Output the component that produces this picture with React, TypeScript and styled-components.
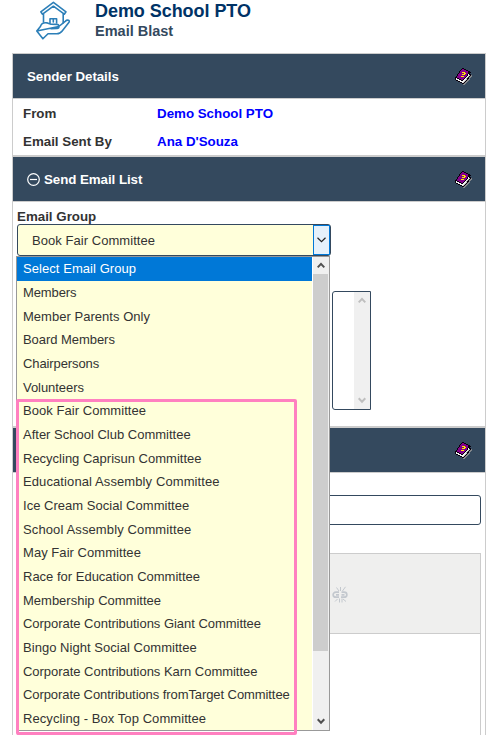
import React from "react";
import styled, { createGlobalStyle } from "styled-components";

const GlobalStyle = createGlobalStyle`
  * { box-sizing: border-box; }
  body {
    margin: 0;
    background: #fff;
    color: #333;
    font: 13.33px/16px "Liberation Sans", Arial, sans-serif;
    overflow: hidden;
  }
`;

const Page = styled.main`
  width: 493px;
  height: 735px;
  overflow: hidden;
  padding-left: 12px;
`;

const Header = styled.header`
  display: flex;
  height: 53px;
  padding-left: 22px;
`;

const Titles = styled.div`
  padding: 1px 0 0 23px;
`;

const Title = styled.h1`
  margin: 0;
  font-size: 18px;
  line-height: 20px;
  letter-spacing: -0.05px;
  color: #003366;
`;

const Subtitle = styled.h2`
  margin: 0;
  font-size: 14.5px;
  line-height: 20px;
  color: #34495e;
`;

const Panel = styled.section<{ $height: number }>`
  width: 474px;
  height: ${(p) => p.$height}px;
  border: 1px solid #ccc;
`;

const Bar = styled.div`
  display: flex;
  align-items: center;
  height: 45px;
  padding: 0 13px 0 14px;
  background: #34495e;
  border-bottom: 1px solid #ccc;
  color: #fff;
  font-weight: bold;
  letter-spacing: -0.06px;
`;

const BarTitle = styled.span<{ $gap?: number }>`
  flex: 1;
  padding-top: 2px;
  margin-left: ${(p) => p.$gap ?? 0}px;
`;

const DetailRow = styled.div<{ $space: number }>`
  display: grid;
  grid-template-columns: 134px 1fr;
  padding: ${(p) => p.$space}px 0 0 10px;
  font-weight: bold;
`;

const Value = styled.span`
  color: #0000ff;
`;

const Form = styled.div`
  padding: 7px 0 0 4px;
`;

const Label = styled.label`
  display: block;
  height: 15px;
  font-weight: bold;
`;

const SelectWrap = styled.div`
  position: relative;
  width: 314px;
  font-size: 13px;
`;

const SelectBox = styled.div`
  display: flex;
  height: 32px;
  border: 1px solid #34495e;
  border-radius: 3px;
  background: #ffffda;
`;

const SelectText = styled.span`
  flex: 1;
  padding: 8px 0 0 14px;
  letter-spacing: 0.05px;
`;

const SelectButton = styled.span`
  display: flex;
  align-items: center;
  justify-content: center;
  width: 17px;
  border: 1px solid #0078d7;
  background: #e5f1fb;
`;

const Menu = styled.div`
  position: absolute;
  z-index: 2;
  top: 32px;
  left: -1px;
  display: flex;
  width: 314px;
  height: 475px;
  border: 1px solid #999;
  background: #fff;
`;

const Options = styled.ul`
  display: grid;
  grid-template-rows: repeat(7, 24px 24px 23px);
  width: 295px;
  margin: 0;
  padding: 0;
  overflow: hidden;
  list-style: none;
  background: #ffffda;
`;

const Option = styled.li<{ $active: boolean; $tracking: number }>`
  padding-left: 6px;
  line-height: 23px;
  letter-spacing: ${(p) => p.$tracking}px;
  white-space: nowrap;
  color: ${(p) => (p.$active ? "#fff" : "#333")};
  background: ${(p) => (p.$active ? "#0078d7" : "transparent")};
`;

const Scroll = styled.div<{ $gap?: number }>`
  display: flex;
  flex-direction: column;
  align-items: flex-start;
  justify-content: space-between;
  width: 16px;
  margin-left: ${(p) => p.$gap ?? 0}px;
  background: #f0f0f0;
`;

const ScrollEnd = styled.span`
  display: flex;
  align-items: center;
  justify-content: center;
  width: 16px;
  height: 17px;
`;

const Thumb = styled.span`
  width: 15px;
  height: 377px;
  margin-bottom: auto;
  background: #cdcdcd;
`;

const Highlight = styled.div`
  position: absolute;
  top: 142px;
  left: -1px;
  width: 281px;
  height: 336px;
  border: 3px solid #ff80c0;
  border-radius: 2px;
`;

const ListBox = styled.div`
  display: flex;
  justify-content: flex-end;
  width: 39px;
  height: 119px;
  margin: 35px 0 0 315px;
  border: 1px solid #34495e;
  border-radius: 3px 0 0 3px;
`;

const MessageForm = styled.div`
  padding: 22px 4px 0;
`;

const SubjectInput = styled.div`
  height: 30px;
  border: 1px solid #34495e;
  border-radius: 3px;
`;

const Editor = styled.div`
  height: 220px;
  margin-top: 28px;
  border: 1px solid #ccc;
`;

const Toolbar = styled.div`
  height: 80px;
  padding: 32px 0 0 314px;
  border-bottom: 1px solid #ccc;
  background: #efefee;
`;

const Icon = styled.svg`
  display: block;
  flex: none;
`;

const LogoIcon = () => (
  <Icon width="38" height="41" viewBox="0 0 38 41" fill="none" stroke="#2c7fb8" strokeWidth="1.6" strokeLinejoin="round" strokeLinecap="round">
    <path d="M6.8 11.8 19.4 2.4 32 11.8 30.3 14.2 19.4 6.2 8.5 14.2Z" />
    <path d="M9.5 14V22M29.2 14V23M16 23V18.8H22.6V23M19.3 19V22" />
    <path d="M2.8 31 6.4 26.4C7.4 23.2 10 22.3 13.3 22.9L17 24.2 22.8 24.4C25.6 24.6 25.6 28.2 23 28.5L17 28.6M24.8 26.5 31.2 21.3C33.4 19.2 36.5 20.2 34.8 22.6L28.2 31C26.8 32.9 24.7 33.8 22.8 33.8H14L8.9 38.8 2.8 31Z" />
  </Icon>
);

const bookRows = [
  ".......kk........",
  "......kppkk......",
  ".....kpppppkk....",
  "....kppppppppkk..",
  "....kppyyypppkkk.",
  "...kpppppyyppkk..",
  "..kppppyyyppkwkk.",
  "..kpppppppppkwskg",
  ".kppppyyyppkwskgg",
  "kkppppppppkwskgg.",
  "kwkkpppppkwskkg..",
  "kwwwkkppkwwskgg..",
  ".kkwwwkkwwskgg...",
  "...kkwwwwskgg....",
  ".....kkwskgg.....",
  ".......kkgg......",
  "........gg.......",
];

const bookColors: Record<string, string> = {
  k: "#08000c",
  p: "#85008a",
  y: "#ffee00",
  w: "#f4f4f4",
  s: "#b8b8b8",
  g: "#82868a",
};

const BookIcon = () => (
  <Icon width="17" height="17" viewBox="0 0 17 17" shapeRendering="crispEdges">
    {bookRows.flatMap((row, y) =>
      [...row].map((c, x) =>
        c === "." ? null : <rect key={`${x}-${y}`} x={x} y={y} width="1" height="1" fill={bookColors[c]} />
      )
    )}
  </Icon>
);

const MinusIcon = () => (
  <Icon width="13" height="13" viewBox="0 0 13 13" fill="none" stroke="#fff" strokeWidth="1.2">
    <circle cx="6.5" cy="6.5" r="5.8" />
    <path d="M3 6.5H10" />
  </Icon>
);

const SelectChevron = () => (
  <Icon width="9" height="6" viewBox="0 0 9 6" fill="none" stroke="#222" strokeWidth="1.2">
    <path d="M.5 .8 4.5 4.6 8.5 .8" />
  </Icon>
);

const ScrollChevron = ({ down, color }: { down?: boolean; color: string }) => (
  <Icon width="8" height="7" viewBox="0 0 8 7" fill="none" stroke={color} strokeWidth="2">
    <path d={down ? "M.7 1.3 4 4.8 7.3 1.3" : "M.7 5.4 4 1.9 7.3 5.4"} />
  </Icon>
);

const UnlinkIcon = () => (
  <Icon width="17" height="17" viewBox="0 0 17 17" fill="none" stroke="#c3c8ce">
    <path strokeWidth="1.7" d="M7 6.2H4C.2 6.2.2 11.2 4 11.2H7M4 8.8H7M9.5 6.2H12C15.8 6.2 15.8 11.2 12 11.2H9M9.5 8.8H12.5" />
    <path strokeWidth="1" d="M8.5 1V5M4.5 1.5 7 5M13.5.8 10.5 5M7.5 12.5V16.5M5.5 13 3 15.5M10 12.5V16.5M11 13 14 15.5" />
  </Icon>
);

const groups = [
  { name: "Select Email Group", tracking: 0.06 },
  { name: "Members", tracking: -0.1 },
  { name: "Member Parents Only", tracking: 0.03 },
  { name: "Board Members", tracking: -0.05 },
  { name: "Chairpersons", tracking: -0.1 },
  { name: "Volunteers", tracking: -0.05 },
  { name: "Book Fair Committee", tracking: 0.05 },
  { name: "After School Club Committee", tracking: 0 },
  { name: "Recycling Caprisun Committee", tracking: 0 },
  { name: "Educational Assembly Committee", tracking: 0.1 },
  { name: "Ice Cream Social Committee", tracking: 0.03 },
  { name: "School Assembly Committee", tracking: 0.12 },
  { name: "May Fair Committee", tracking: 0.05 },
  { name: "Race for Education Committee", tracking: 0 },
  { name: "Membership Committee", tracking: 0 },
  { name: "Corporate Contributions Giant Committee", tracking: -0.03 },
  { name: "Bingo Night Social Committee", tracking: 0.04 },
  { name: "Corporate Contributions Karn Committee", tracking: -0.03 },
  { name: "Corporate Contributions fromTarget Committee", tracking: -0.08 },
  { name: "Recycling - Box Top Committee", tracking: 0.07 },
];

export default function App() {
  return (
    <>
      <GlobalStyle />
      <Page>
        <Header>
          <LogoIcon />
          <Titles>
            <Title>Demo School PTO</Title>
            <Subtitle>Email Blast</Subtitle>
          </Titles>
        </Header>
        <Panel $height={103}>
          <Bar>
            <BarTitle>Sender Details</BarTitle>
            <BookIcon />
          </Bar>
          <DetailRow $space={7}>
            <span>From</span>
            <Value>Demo School PTO</Value>
          </DetailRow>
          <DetailRow $space={12}>
            <span>Email Sent By</span>
            <Value>Ana D'Souza</Value>
          </DetailRow>
        </Panel>
        <Panel $height={271}>
          <Bar>
            <MinusIcon />
            <BarTitle $gap={4}>Send Email List</BarTitle>
            <BookIcon />
          </Bar>
          <Form>
            <Label>Email Group</Label>
            <SelectWrap>
              <SelectBox>
                <SelectText>Book Fair Committee</SelectText>
                <SelectButton>
                  <SelectChevron />
                </SelectButton>
              </SelectBox>
              <Menu>
                <Options>
                  {groups.map((group, i) => (
                    <Option key={group.name} $active={i === 0} $tracking={group.tracking}>
                      {group.name}
                    </Option>
                  ))}
                </Options>
                <Scroll $gap={1}>
                  <ScrollEnd>
                    <ScrollChevron color="#505050" />
                  </ScrollEnd>
                  <Thumb />
                  <ScrollEnd>
                    <ScrollChevron down color="#505050" />
                  </ScrollEnd>
                </Scroll>
                <Highlight />
              </Menu>
            </SelectWrap>
            <ListBox>
              <Scroll>
                <ScrollEnd>
                  <ScrollChevron color="#bfbfbf" />
                </ScrollEnd>
                <ScrollEnd>
                  <ScrollChevron down color="#bfbfbf" />
                </ScrollEnd>
              </Scroll>
            </ListBox>
          </Form>
        </Panel>
        <Panel $height={400}>
          <Bar>
            <BarTitle />
            <BookIcon />
          </Bar>
          <MessageForm>
            <SubjectInput />
            <Editor>
              <Toolbar>
                <UnlinkIcon />
              </Toolbar>
            </Editor>
          </MessageForm>
        </Panel>
      </Page>
    </>
  );
}
